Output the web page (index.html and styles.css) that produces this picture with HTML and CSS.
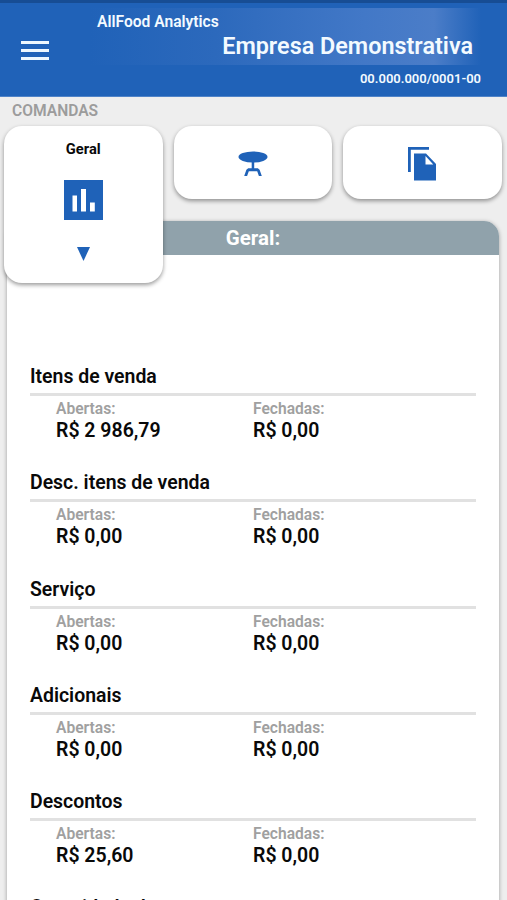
FILE: index.html
```
<!DOCTYPE html>
<html lang="pt-BR">
<head>
<meta charset="utf-8">
<title>AllFood Analytics</title>
<link rel="stylesheet" href="styles.css">
</head>
<body>
<div class="app">
  <header class="header">
    <button class="menu" aria-label="Menu"><span></span><span></span><span></span></button>
    <div class="company">
      <div class="banner">
        <div class="app-name">AllFood Analytics</div>
        <h1 class="company-name">Empresa Demonstrativa</h1>
      </div>
      <div class="document">00.000.000/0001-00</div>
    </div>
  </header>
  <main class="main">
    <h2 class="section">COMANDAS</h2>
    <nav class="tabs">
      <div class="tab tab-active">
        <span class="tab-label">Geral</span>
        <svg class="chart" viewBox="0 0 39 40"><path fill="#1f62b8" d="M0 0h39v40H0z"/><path fill="#fff" d="M8.500 15.500h4.500V31.500h-4.500zM17 9h5v22.500h-5zM26 22.500h4.800v9H26z"/></svg>
        <svg class="arrow" viewBox="0 0 13 14"><path fill="#1f62b8" d="M0 0h13L6.500 14z"/></svg>
      </div>
      <div class="tab">
        <svg class="table" viewBox="0 0 30 26"><g fill="#1f62b8"><ellipse cx="15" cy="6" rx="14.500" ry="5.500"/><path d="M13.700 11h2.500v6.300h3.600l1.800 1.500 2.200 6.200h-2.900l-1.700-4.800h-8.400L9.100 25H6.200l2.200-6.200 1.800-1.500h3.500z"/></g></svg>
      </div>
      <div class="tab">
        <svg class="copy" viewBox="0 0 28 34"><path fill="#1f62b8" fill-rule="evenodd" d="M0 0h21v2.800H2.800V25H0zM6 6.500h12L28 17v16.500H6zM17.500 9v8.500h7.800z"/></svg>
      </div>
    </nav>
    <section class="panel">
      <h3 class="panel-title">Geral:</h3>
      <div class="groups">
        <article class="group"><h4>Itens de venda</h4><dl><div><dt>Abertas:</dt><dd>R$ 2 986,79</dd></div><div><dt>Fechadas:</dt><dd>R$ 0,00</dd></div></dl></article>
        <article class="group"><h4>Desc. itens de venda</h4><dl><div><dt>Abertas:</dt><dd>R$ 0,00</dd></div><div><dt>Fechadas:</dt><dd>R$ 0,00</dd></div></dl></article>
        <article class="group"><h4>Serviço</h4><dl><div><dt>Abertas:</dt><dd>R$ 0,00</dd></div><div><dt>Fechadas:</dt><dd>R$ 0,00</dd></div></dl></article>
        <article class="group"><h4>Adicionais</h4><dl><div><dt>Abertas:</dt><dd>R$ 0,00</dd></div><div><dt>Fechadas:</dt><dd>R$ 0,00</dd></div></dl></article>
        <article class="group"><h4>Descontos</h4><dl><div><dt>Abertas:</dt><dd>R$ 25,60</dd></div><div><dt>Fechadas:</dt><dd>R$ 0,00</dd></div></dl></article>
        <article class="group"><h4>Quantidade de</h4></article>
      </div>
    </section>
  </main>
</div>
</body>
</html>
```
FILE: styles.css
```
* { box-sizing: border-box; }
body, h1, h2, h3, h4, dl, dd { margin: 0; }
body { font-family: Roboto, sans-serif; font-weight: 600; background: #eee; color: #090909; }
.app { height: 900px; overflow: hidden; }
.header { height: 97px; display: flex; background: #2062b8; border-top: 3px solid #174d94; border-bottom: 1px solid #4f83c8; color: #f3faff; }
.menu { width: 28px; height: 19px; margin: 38px 0 0 21px; padding: 0; border: 0; background: none; display: flex; flex-direction: column; justify-content: space-between; }
.menu span { height: 3px; width: 28px; background: #eef8ff; }
.company { flex: 1; margin-left: 41px; padding-top: 5px; }
.banner { height: 57px; margin-right: 26px; background: linear-gradient(90deg, #2062b8 0, #2c69bc 32%, #4278c7 70%, #4b7dc8 88%, #2062b8 100%); }
.app-name { padding: 5px 0 0 7px; font-size: 15.600px; line-height: 18px; white-space: nowrap; }
.company-name { margin-right: 8px; font-size: 23.400px; font-weight: 600; line-height: 29px; text-align: right; margin-top: 1px; white-space: nowrap; }
.document { margin-right: 26px; text-align: right; font-size: 13px; line-height: 16px; padding-top: 6px; }
.main { display: flex; flex-direction: column; }
.section { height: 29px; padding: 5px 0 0 12px; font-size: 15.600px; line-height: 18px; color: #9c9c9c; font-weight: 600; }
.tabs { height: 95px; display: flex; align-items: flex-start; gap: 11px; padding-left: 4px; position: relative; z-index: 1; }
.tab { flex: none; width: 158.500px; height: 73px; background: #fff; border-radius: 18px; box-shadow: 0 2px 4px rgba(0,0,0,.4); display: flex; flex-direction: column; align-items: center; justify-content: center; }
.tab-active { height: 157px; justify-content: flex-start; padding-top: 14px; }
.tab-label { font-size: 14.700px; font-weight: 700; line-height: 18px; }
.chart { width: 39px; height: 40px; margin-top: 22px; }
.arrow { width: 13px; height: 14px; margin-top: 27px; }
.table { width: 30px; height: 26px; margin-top: 2px; }
.copy { width: 28px; height: 34px; margin: 2px 0 0 -1px; }
.panel { height: 700px; margin: 0 8px 0 7px; background: #fff; border-radius: 15px 15px 0 0; box-shadow: 0 1px 4px rgba(0,0,0,.35); }
.panel-title { height: 34px; border-radius: 15px 15px 0 0; background: #90a2ab; color: #fff; font-size: 20.500px; font-weight: 700; line-height: 35px; text-align: center; }
.groups { padding: 109px 23px 0; }
.group { height: 106.250px; }
.group h4 { height: 32px; border-bottom: 3px solid #e1e1e1; font-size: 19.450px; line-height: 25px; font-weight: 600; }
.group dl { display: grid; grid-template-columns: 197px 1fr; padding: 4px 0 0 26px; }
.group dt { font-size: 15.600px; line-height: 19px; color: #a0a0a0; }
.group dd { font-size: 19.500px; line-height: 24px; }
```
